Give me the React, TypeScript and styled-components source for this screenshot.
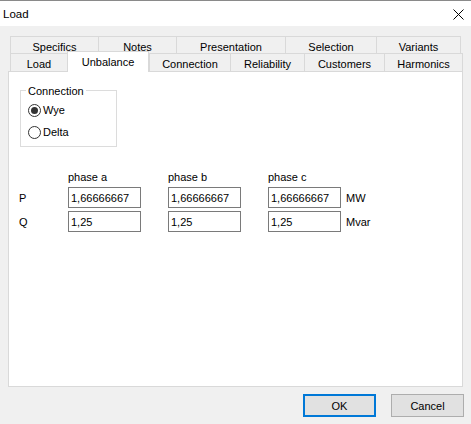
import styled, { createGlobalStyle } from "styled-components";

const GlobalStyle = createGlobalStyle`
  html, body {
    margin: 0;
    padding: 0;
    background: #f0f0f0;
  }
  * {
    box-sizing: border-box;
  }
`;

const rowOne = [
  { label: "Specifics", width: 88 },
  { label: "Notes", width: 78 },
  { label: "Presentation", width: 109 },
  { label: "Selection", width: 91 },
  { label: "Variants", width: 85 },
];

const rowTwo = [
  { label: "Load", width: 57 },
  { label: "Unbalance", width: 82, active: true },
  { label: "Connection", width: 81 },
  { label: "Reliability", width: 74 },
  { label: "Customers", width: 80 },
  { label: "Harmonics", width: 79 },
];

const phases = ["phase a", "phase b", "phase c"];

const rows = [
  { name: "P", value: "1,66666667", unit: "MW" },
  { name: "Q", value: "1,25", unit: "Mvar" },
];

export default function App() {
  return (
    <>
      <GlobalStyle />
      <Window>
        <TitleBar>
          <Title>Load</Title>
          <CloseButton>
            <svg width="11" height="11" viewBox="0 0 11 11">
              <path d="M0.5 0.5 L10.5 10.5 M10.5 0.5 L0.5 10.5" stroke="#000" strokeWidth="1" />
            </svg>
          </CloseButton>
        </TitleBar>

        <Body>
          <TabStrip>
            <TabRow>
              {rowOne.map((t, i) => (
                <BackTab key={t.label} $width={t.width} $last={i === rowOne.length - 1}>
                  {t.label}
                </BackTab>
              ))}
            </TabRow>
            <TabRow>
              {rowTwo.map((t, i) => (
                <FrontTab
                  key={t.label}
                  $width={t.width}
                  $active={!!t.active}
                  $last={i === rowTwo.length - 1}
                >
                  {t.label}
                </FrontTab>
              ))}
            </TabRow>
          </TabStrip>

          <Panel>
            <GroupBox>
              <Legend>
                <LegendText>Connection</LegendText>
              </Legend>
              <RadioRow>
                <RadioCircle $checked />
                Wye
              </RadioRow>
              <RadioRow>
                <RadioCircle />
                Delta
              </RadioRow>
            </GroupBox>

            <ValueGrid>
              <span />
              {phases.map((p) => (
                <Header key={p}>{p}</Header>
              ))}
              <span />
              {rows.map((r) => (
                <Row key={r.name}>
                  <RowLabel>{r.name}</RowLabel>
                  {phases.map((p) => (
                    <Field key={p} readOnly value={r.value} />
                  ))}
                  <RowLabel>{r.unit}</RowLabel>
                </Row>
              ))}
            </ValueGrid>
          </Panel>

          <Footer>
            <Button $primary>OK</Button>
            <Button>Cancel</Button>
          </Footer>
        </Body>
      </Window>
    </>
  );
}

const Window = styled.div`
  width: 471px;
  height: 424px;
  background: #f0f0f0;
  font-family: "Segoe UI", "Liberation Sans", Arial, sans-serif;
  font-size: 11px;
  color: #000;
  overflow: hidden;
`;

const TitleBar = styled.div`
  height: 26px;
  background: #fff;
  border-top: 1px solid #8a8a8a;
  display: flex;
  align-items: center;
  justify-content: space-between;
  padding: 0 7px 0 3px;
`;

const Title = styled.span`
  font-size: 11.5px;
`;

const CloseButton = styled.div`
  width: 11px;
  height: 11px;
  display: flex;
  margin-top: 1px;
`;

const Body = styled.div`
  padding-top: 10px;
`;

const TabStrip = styled.div`
  margin-left: 10px;
  display: flex;
  flex-direction: column;
`;

const TabRow = styled.div`
  display: flex;
`;

const BackTab = styled.div<{ $width: number; $last?: boolean }>`
  width: ${(p) => p.$width}px;
  height: 17px;
  border-top: 1px solid #d9d9d9;
  border-left: 1px solid #d9d9d9;
  border-right: ${(p) => (p.$last ? "1px solid #d9d9d9" : "none")};
  display: flex;
  align-items: center;
  justify-content: center;
  padding-top: 3px;
`;

const FrontTab = styled.div<{ $width: number; $active?: boolean; $last?: boolean }>`
  width: ${(p) => p.$width}px;
  height: ${(p) => (p.$active ? 21 : 18)}px;
  margin-top: ${(p) => (p.$active ? -2 : 0)}px;
  margin-bottom: ${(p) => (p.$active ? -1 : 0)}px;
  background: ${(p) => (p.$active ? "#fff" : "#f0f0f0")};
  border-top: 1px solid #d9d9d9;
  border-left: 1px solid #d9d9d9;
  border-right: ${(p) => (p.$active || p.$last ? "1px solid #d9d9d9" : "none")};
  position: relative;
  z-index: ${(p) => (p.$active ? 2 : 0)};
  display: flex;
  align-items: center;
  justify-content: center;
  padding-top: ${(p) => (p.$active ? 0 : 3)}px;
  padding-bottom: ${(p) => (p.$active ? 1 : 0)}px;
`;

const Panel = styled.div`
  position: relative;
  z-index: 1;
  margin: 0 8px;
  height: 316px;
  background: #fff;
  border: 1px solid #d9d9d9;
  padding: 12px 10px 0;
`;

const GroupBox = styled.fieldset`
  width: 97px;
  margin: 0 0 0 1px;
  padding: 3px 0 3px 5px;
  border: 1px solid #dcdcdc;
  min-width: 0;
`;

const Legend = styled.legend`
  padding: 0 2px;
  line-height: 12px;
`;

const LegendText = styled.span`
  position: relative;
  top: 1px;
`;

const RadioRow = styled.div`
  height: 22px;
  display: flex;
  align-items: center;
  gap: 2px;
  margin-left: 2px;
`;

const RadioCircle = styled.span<{ $checked?: boolean }>`
  width: 13px;
  height: 13px;
  border-radius: 50%;
  border: 1px solid #333;
  background: #fff;
  display: flex;
  align-items: center;
  justify-content: center;
  &::after {
    content: "";
    width: 7px;
    height: 7px;
    border-radius: 50%;
    background: ${(p) => (p.$checked ? "#333" : "transparent")};
  }
`;

const ValueGrid = styled.div`
  margin: 20px 0 0 0;
  display: grid;
  grid-template-columns: 49px 100px 100px 78px auto;
  grid-template-rows: 17px;
  grid-auto-rows: 21px;
  row-gap: 3px;
`;

const Header = styled.span`
  line-height: 16px;
  padding-top: 2px;
`;

const Row = styled.div`
  display: contents;
`;

const RowLabel = styled.span`
  display: flex;
  align-items: center;
`;

const Field = styled.input`
  width: 73px;
  height: 21px;
  border: 1px solid #7a7a7a;
  padding: 0 2px;
  font: inherit;
  color: #000;
  background: #fff;
  outline: none;
`;

const Footer = styled.div`
  display: flex;
  justify-content: flex-end;
  gap: 15px;
  padding: 7px 7px 0 0;
`;

const Button = styled.div<{ $primary?: boolean }>`
  width: 73px;
  height: 23px;
  background: #e1e1e1;
  border: ${(p) => (p.$primary ? "2px solid #0078d7" : "1px solid #adadad")};
  display: flex;
  align-items: center;
  justify-content: center;
`;
